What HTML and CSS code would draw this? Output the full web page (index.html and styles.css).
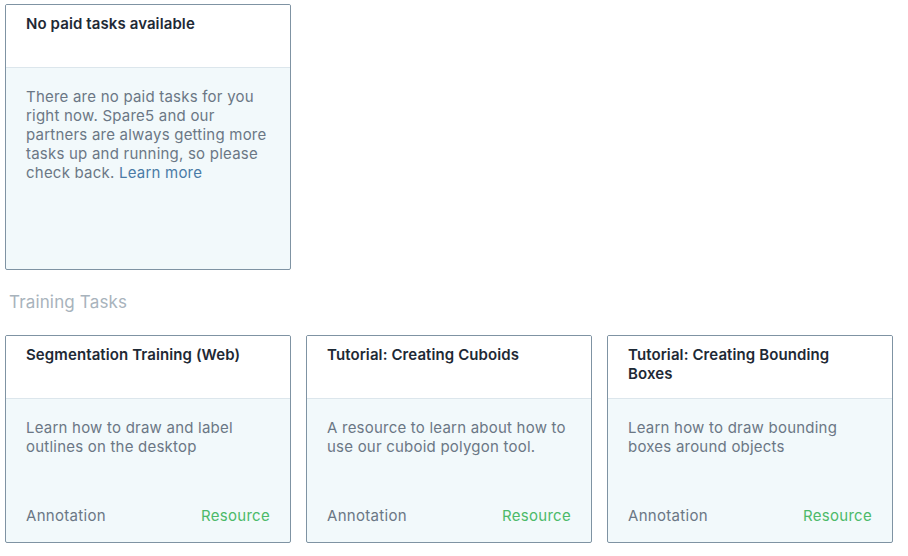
FILE: index.html
```html
<!DOCTYPE html>
<html>
<head>
<meta charset="utf-8">
<link rel="stylesheet" href="styles.css">
</head>
<body>
<div class="page">
  <section class="paid">
    <div class="card card-tall">
      <div class="card-head"><h3 class="card-title">No paid tasks available</h3></div>
      <div class="card-body">
        <p class="card-desc">There are no paid tasks for you right now. Spare5 and our partners are always getting more tasks up and running, so please check back. <a class="link" href="#">Learn more</a></p>
      </div>
    </div>
  </section>
  <h2 class="section-title">Training Tasks</h2>
  <section class="grid">
    <div class="card">
      <div class="card-head"><h3 class="card-title">Segmentation Training (Web)</h3></div>
      <div class="card-body">
        <p class="card-desc">Learn how to draw and label outlines on the desktop</p>
        <div class="card-foot"><span class="cat">Annotation</span><span class="type">Resource</span></div>
      </div>
    </div>
    <div class="card">
      <div class="card-head"><h3 class="card-title">Tutorial: Creating Cuboids</h3></div>
      <div class="card-body">
        <p class="card-desc">A resource to learn about how to use our cuboid polygon tool.</p>
        <div class="card-foot"><span class="cat">Annotation</span><span class="type">Resource</span></div>
      </div>
    </div>
    <div class="card">
      <div class="card-head"><h3 class="card-title">Tutorial: Creating Bounding Boxes</h3></div>
      <div class="card-body">
        <p class="card-desc">Learn how to draw bounding boxes around objects</p>
        <div class="card-foot"><span class="cat">Annotation</span><span class="type">Resource</span></div>
      </div>
    </div>
  </section>
</div>
</body>
</html>
```

FILE: styles.css
```css
* { box-sizing: border-box; }
html, body { margin: 0; padding: 0; background: #ffffff; }
body {
  font-family: Inter, "Noto Sans", "Liberation Sans", sans-serif;
  color: #6b7785;
}
.page { padding: 4px 5px; }
.paid { width: 286px; }
.grid {
  display: grid;
  grid-template-columns: repeat(3, 286px);
  column-gap: 15px;
}
.card {
  border: 1px solid #7f93a3;
  border-radius: 2px;
  background: #f2f9fb;
  display: flex;
  flex-direction: column;
  height: 208px;
  overflow: hidden;
}
.card-tall { height: 266px; }
.card-head {
  background: #ffffff;
  height: 63px;
  flex: none;
  padding: 9px 20px 0 20px;
  border-bottom: 1px solid #dce6ec;
}
.card-title {
  margin: 0;
  font-size: 15px;
  line-height: 19px;
  font-weight: 600;
  letter-spacing: 0.1px;
  color: #1e2935;
}
.card-body {
  flex: 1;
  display: flex;
  flex-direction: column;
  padding: 19px 20px 17px 20px;
}
.card-desc {
  margin: 0;
  font-size: 15px;
  line-height: 19px;
  letter-spacing: 0.22px;
  color: #6b7785;
}
.link { color: #4a7ba6; text-decoration: none; }
.card-foot {
  margin-top: auto;
  display: flex;
  justify-content: space-between;
  font-size: 15px;
  line-height: 19px;
  letter-spacing: 0.3px;
}
.cat { color: #6b7785; }
.type { color: #4cba69; }
.section-title {
  margin: 22px 0 23px 4px;
  font-size: 17px;
  line-height: 20px;
  font-weight: 400;
  letter-spacing: 0.15px;
  color: #a8b3bc;
}
```
